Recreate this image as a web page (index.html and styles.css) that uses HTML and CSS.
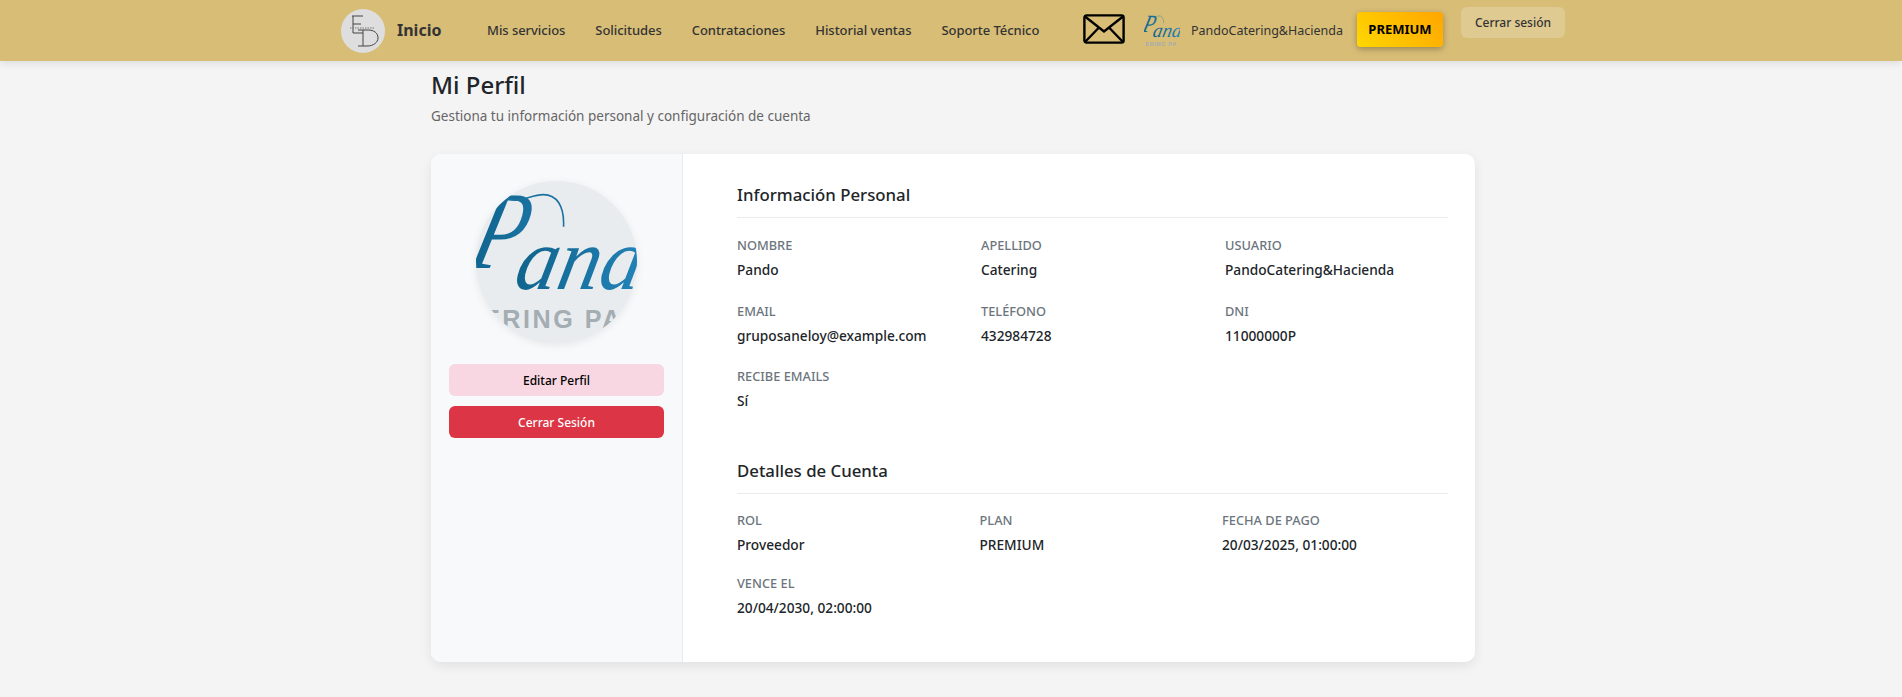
FILE: index.html
```html
<!DOCTYPE html>
<html lang="es">
<head>
  <meta charset="UTF-8" />
  <meta name="viewport" content="width=device-width, initial-scale=1.0" />
  <title>Mi Perfil</title>
  <link rel="stylesheet" href="styles.css">
</head>
<body>

  <!-- shared logo, used in the navbar and in the avatar -->
  <svg class="logo-defs" aria-hidden="true">
    <defs>
      <linearGradient id="blue" gradientUnits="userSpaceOnUse" x1="-40" y1="0" x2="120" y2="0">
        <stop offset="0" stop-color="#0a5a80"/>
        <stop offset="1" stop-color="#2180b4"/>
      </linearGradient>
      <symbol id="pando-logo" viewBox="0 0 160 160">
        <text class="logo-script logo-cap" fill="url(#blue)" transform="translate(-10 86) skewX(-15) scale(0.78 1)">P</text>
        <text class="logo-script" fill="url(#blue)" transform="translate(36 107) skewX(-12) scale(0.95 1)">and</text>
        <path d="M32 17C44 22 54 13 67 13C80 13 88 24 87 45" fill="none" stroke="#1c729f" stroke-width="1.6"/>
        <text x="7" y="146" class="logo-sub">ERING PA</text>
      </symbol>
    </defs>
  </svg>

  <header class="navbar">
    <div class="nav-inner">
      <a class="brand">
        <svg class="brand-logo" viewBox="0 0 44 44">
          <circle cx="22" cy="22" r="22" fill="#dedede"/>
          <g fill="none" stroke="#444" stroke-width="1">
            <path d="M11 7H22M12 7V24H22M12 15H20"/>
            <path d="M22 21V37M17 37H26C33 37 37 33 37 29C37 24 33 21 27 21H17"/>
          </g>
          <path d="M9 19H33" stroke="#777" stroke-width="1" stroke-dasharray="1.5 1"/>
        </svg>
        <span class="brand-name">Inicio</span>
      </a>
      <nav class="nav-links">
        <a>Mis servicios</a>
        <a>Solicitudes</a>
        <a>Contrataciones</a>
        <a>Historial ventas</a>
        <a>Soporte Técnico</a>
      </nav>
      <div class="nav-user">
        <svg class="mail-icon" viewBox="0 0 42 30">
          <rect x="1.4" y="1.4" width="39.2" height="27.2" rx="2" fill="none" stroke="#000" stroke-width="2.4"/>
          <path d="M2 2.5 21 17.5 40 2.5M2 28 16 13.5M40 28 26 13.5" fill="none" stroke="#000" stroke-width="2.4"/>
        </svg>
        <svg class="mini-logo"><use href="#pando-logo"/></svg>
        <span class="user-name">PandoCatering&amp;Hacienda</span>
        <span class="plan-badge">PREMIUM</span>
        <button class="logout-link">Cerrar sesión</button>
      </div>
    </div>
  </header>

  <main class="page">
    <h1 class="page-title">Mi Perfil</h1>
    <p class="page-sub">Gestiona tu información personal y configuración de cuenta</p>

    <div class="profile-card">
      <aside class="profile-side">
        <svg class="avatar"><use href="#pando-logo"/></svg>
        <button class="btn btn-edit">Editar Perfil</button>
        <button class="btn btn-logout">Cerrar Sesión</button>
      </aside>

      <section class="profile-main">
        <div class="info-block">
          <h2>Información Personal</h2>
          <div class="info-grid">
            <div class="info-item"><label>NOMBRE</label><span>Pando</span></div>
            <div class="info-item"><label>APELLIDO</label><span>Catering</span></div>
            <div class="info-item"><label>USUARIO</label><span>PandoCatering&amp;Hacienda</span></div>
            <div class="info-item"><label>EMAIL</label><span>gruposaneloy@example.com</span></div>
            <div class="info-item"><label>TELÉFONO</label><span>432984728</span></div>
            <div class="info-item"><label>DNI</label><span>11000000P</span></div>
            <div class="info-item"><label>RECIBE EMAILS</label><span>Sí</span></div>
          </div>
        </div>
        <div class="info-block account">
          <h2>Detalles de Cuenta</h2>
          <div class="info-grid">
            <div class="info-item"><label>ROL</label><span>Proveedor</span></div>
            <div class="info-item"><label>PLAN</label><span>PREMIUM</span></div>
            <div class="info-item"><label>FECHA DE PAGO</label><span>20/03/2025, 01:00:00</span></div>
            <div class="info-item"><label>VENCE EL</label><span>20/04/2030, 02:00:00</span></div>
          </div>
        </div>
      </section>
    </div>
  </main>

</body>
</html>
```

FILE: styles.css
```css
* {
  box-sizing: border-box;
}

body {
  margin: 0;
  min-height: 697px;
  background-color: #f4f4f4;
  font-family: 'Noto Sans', 'Open Sans', sans-serif;
  color: #212529;
}

.logo-defs {
  display: block;
  width: 0;
  height: 0;
}

.logo-script {
  font-family: 'Liberation Serif', serif;
  font-style: italic;
  font-size: 88px;
}

.logo-cap {
  font-size: 110px;
}

.logo-sub {
  font-family: 'Liberation Sans', sans-serif;
  font-size: 25px;
  font-weight: 700;
  letter-spacing: 2.5px;
  fill: #a3adb2;
}

.navbar {
  height: 61px;
  background-color: #d8bd76;
  box-shadow: 0 2px 8px rgba(0, 0, 0, 0.1);
}

.nav-inner {
  display: flex;
  align-items: center;
  height: 100%;
  padding-left: 341px;
}

.brand {
  display: flex;
  align-items: center;
  gap: 12px;
  width: 146px;
}

.brand-logo {
  width: 44px;
  height: 44px;
}

.brand-name {
  font-size: 16px;
  font-weight: 700;
  color: #333;
  padding-bottom: 2px;
}

.nav-links {
  display: flex;
  gap: 30px;
  width: 596px;
  padding-bottom: 2px;
}

.nav-links a {
  font-size: 13px;
  font-weight: 500;
  letter-spacing: -0.05px;
  color: #333;
  white-space: nowrap;
}

.nav-user {
  display: flex;
  align-items: center;
  align-self: stretch;
}

.mail-icon {
  width: 42px;
  height: 30px;
  margin: 0 19px 4px 0;
}

.mini-logo {
  width: 36px;
  height: 36px;
  margin-right: 11px;
}

.user-name {
  font-size: 12.5px;
  color: #333;
  width: 166px;
  white-space: nowrap;
}

.plan-badge {
  width: 86px;
  height: 35px;
  margin-bottom: 2px;
  line-height: 35px;
  text-align: center;
  font-size: 13px;
  font-weight: 700;
  color: #000;
  background: linear-gradient(45deg, #ffd700, #ffa500);
  border-radius: 4px;
  box-shadow: 0 2px 6px rgba(0, 0, 0, 0.3);
}

.logout-link {
  align-self: flex-start;
  width: 104px;
  height: 31px;
  margin: 7px 0 0 18px;
  border: none;
  border-radius: 6px;
  background-color: rgba(255, 255, 255, 0.2);
  font-family: inherit;
  font-size: 12px;
  font-weight: 500;
  color: #333;
}

.page {
  width: 1044px;
  margin-left: 431px;
  padding-top: 6px;
}

.page-title {
  margin: 0;
  font-size: 24px;
  line-height: 36px;
  font-weight: 500;
}

.page-sub {
  margin: 3px 0 0;
  font-size: 13.5px;
  line-height: 20px;
  color: #666;
}

.profile-card {
  display: flex;
  height: 508px;
  margin-top: 28px;
  background-color: #fff;
  border-radius: 10px;
  box-shadow: 0 4px 12px rgba(0, 0, 0, 0.08);
  overflow: hidden;
}

.profile-side {
  display: flex;
  flex-direction: column;
  align-items: center;
  width: 252px;
  flex-shrink: 0;
  padding: 27px 18px;
  background-color: #f8f9fa;
  border-right: 1px solid #e9ecef;
}

.avatar {
  width: 161px;
  height: 162px;
  border-radius: 50%;
  background-color: #e9ecef;
  box-shadow: 0 2px 8px rgba(0, 0, 0, 0.08);
  margin-bottom: 21px;
  flex-shrink: 0;
}

.btn {
  width: 215px;
  height: 32px;
  border: none;
  border-radius: 6px;
  font-family: inherit;
  font-size: 12px;
  font-weight: 500;
}

.btn-edit {
  background-color: #f8d7e3;
  color: #000;
}

.btn-logout {
  margin-top: 10px;
  background-color: #dc3545;
  color: #fff;
}

.profile-main {
  flex: 1;
  min-width: 0;
  padding: 26px 27px 0 54px;
}

.info-block h2 {
  margin: 0;
  padding-bottom: 7px;
  border-bottom: 1px solid #e9ecef;
  font-size: 16.8px;
  line-height: 30px;
  font-weight: 500;
}

.info-grid {
  display: grid;
  grid-template-columns: 244px 244px 1fr;
  grid-auto-rows: 65.5px;
  margin-top: 17px;
}

.account {
  margin-top: 24px;
}

.account .info-grid {
  grid-template-columns: 242.5px 242.5px 1fr;
  grid-auto-rows: 63px;
  margin-top: 16px;
}

.info-item label {
  display: block;
  font-size: 12.8px;
  line-height: 20px;
  font-weight: 500;
  color: #6c757d;
}

.info-item span {
  display: block;
  margin-top: 5px;
  font-size: 13.7px;
  line-height: 20px;
  font-weight: 500;
}
```
